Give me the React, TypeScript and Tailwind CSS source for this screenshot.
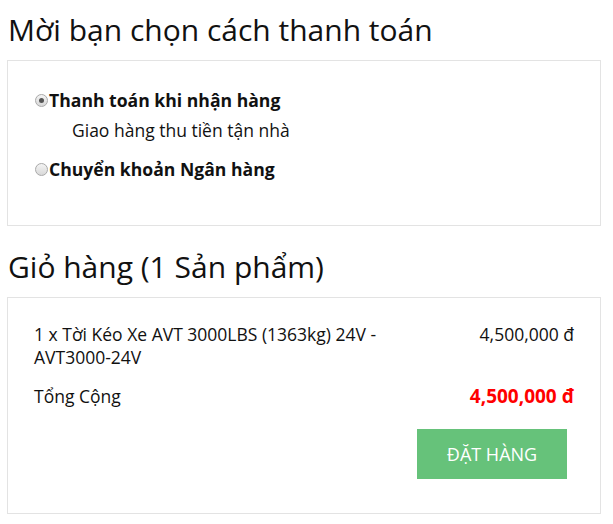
import React from 'react';

const Radio = ({ checked }: { checked?: boolean }) => (
  <span className="inline-flex h-[13px] w-[13px] shrink-0 items-center justify-center rounded-full border border-[#a9a9a9] bg-gradient-to-b from-[#f4f4f4] to-[#d8d8d8]">
    {checked && <span className="h-[5px] w-[5px] rounded-full bg-[#555]" />}
  </span>
);

const App = () => {
  return (
    <div className="min-h-screen bg-white px-[7px] font-['Open_Sans',sans-serif] text-[#111]">
      <h2 className="pt-[12px] pl-px text-[30px] leading-[36px]">Mời bạn chọn cách thanh toán</h2>

      <div className="mt-[12px] h-[166px] w-[594px] border border-[#e3e3e3] px-[27px] pt-[27px]">
        <label className="flex items-center">
          <Radio checked />
          <span className="pl-px text-[17.6px] leading-[24px] font-bold">Thanh toán khi nhận hàng</span>
        </label>
        <p className="pt-[6px] pl-[37px] text-[17.5px] leading-[24px]">Giao hàng thu tiền tận nhà</p>
        <label className="mt-[15px] flex items-center">
          <Radio />
          <span className="pl-px text-[17.6px] leading-[24px] font-bold">Chuyển khoản Ngân hàng</span>
        </label>
      </div>

      <h2 className="pt-[23px] pl-px text-[30px] leading-[36px]">Giỏ hàng (1 Sản phẩm)</h2>

      <div className="mt-[12px] h-[217px] w-[594px] border border-[#e3e3e3] px-[26px] pt-[25px]">
        <div className="flex justify-between text-[17.5px] leading-[23px]">
          <span className="w-[380px]">1 x Tời Kéo Xe AVT 3000LBS (1363kg) 24V - AVT3000-24V</span>
          <span>4,500,000 đ</span>
        </div>
        <div className="mt-[16px] flex items-center justify-between">
          <span className="text-[17.5px] leading-[23px]">Tổng Cộng</span>
          <span className="text-[19px] leading-[23px] font-bold text-[#ff0000]">4,500,000 đ</span>
        </div>
        <div className="mt-[21px] flex justify-end pr-[7px]">
          <button className="h-[50px] w-[150px] bg-[#66c27a] text-[18px] text-white uppercase">Đặt hàng</button>
        </div>
      </div>
    </div>
  );
};

export default App;
